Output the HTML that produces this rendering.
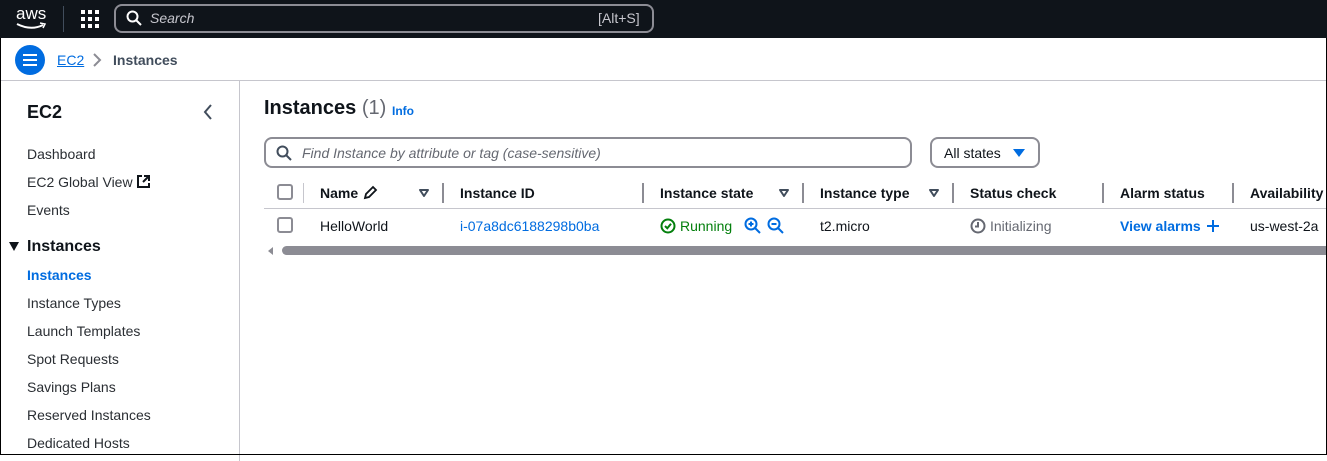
<!DOCTYPE html>
<html><head><meta charset="utf-8"><style>
*{box-sizing:border-box;margin:0;padding:0}
body{width:1327px;height:455px;overflow:hidden;font-family:"Liberation Sans",sans-serif;font-size:14px;color:#0f141a;background:#fff;position:relative}
.abs{position:absolute;white-space:nowrap}
.top{position:absolute;left:0;top:0;width:1327px;height:38px;background:#0f141a}
.crumb{position:absolute;left:0;top:38px;width:1327px;height:43px;border-bottom:1px solid #c6c6cd}
.side{position:absolute;left:0;top:81px;width:240px;height:380px;border-right:1px solid #c6c6cd}
.nav{position:absolute;left:27px;font-size:14px;color:#2a2e33}
.th{position:absolute;top:185px;font-weight:bold;font-size:14px;color:#0f141a}
.sep{position:absolute;top:183px;width:2px;height:20px;background:#8c8c94}
.cb{position:absolute;width:16px;height:16px;border:2px solid #8c8c94;border-radius:3px;left:277px}
.tri{position:absolute;top:187px}
</style></head><body>
<div class="top">
<div class="abs" style="left:16px;top:4px;color:#fff;font-size:17px">aws</div>
<svg class="abs" style="left:15px;top:22px" width="34" height="8"><path d="M2 2 Q16 9 28 3" stroke="#fff" stroke-width="2" fill="none"/><path d="M25 1 L30 2 L28 6" stroke="#fff" stroke-width="1.5" fill="none"/></svg>
<div class="abs" style="left:63px;top:6px;width:1px;height:26px;background:#414d5c"></div>
<svg class="abs" style="left:81px;top:10px" width="18" height="18" fill="#fff"><rect x="0" y="0" width="4" height="4"/><rect x="7" y="0" width="4" height="4"/><rect x="14" y="0" width="4" height="4"/><rect x="0" y="7" width="4" height="4"/><rect x="7" y="7" width="4" height="4"/><rect x="14" y="7" width="4" height="4"/><rect x="0" y="14" width="4" height="4"/><rect x="7" y="14" width="4" height="4"/><rect x="14" y="14" width="4" height="4"/></svg>
<div class="abs" style="left:114px;top:4px;width:540px;height:29px;border:2px solid #8c8c94;border-radius:8px"></div>
<svg class="abs" style="left:126px;top:10px" width="16" height="16"><circle cx="6.5" cy="6.5" r="5" stroke="#fff" stroke-width="2" fill="none"/><path d="M10 10 L15 15" stroke="#fff" stroke-width="2"/></svg>
<div class="abs" style="left:150px;top:10px;color:#c6c6cd;font-style:italic">Search</div>
<div class="abs" style="left:598px;top:10px;color:#c6c6cd">[Alt+S]</div>
</div>
<div class="crumb">
<div class="abs" style="left:15px;top:7px;width:30px;height:30px;border-radius:50%;background:#006ce0"></div>
<svg class="abs" style="left:22px;top:14px" width="16" height="16"><path d="M1 3H15M1 8H15M1 13H15" stroke="#fff" stroke-width="2"/></svg>
<div class="abs" style="left:57px;top:14px;color:#006ce0;text-decoration:underline">EC2</div>
<svg class="abs" style="left:92px;top:15px" width="10" height="14"><path d="M2 1 L8 7 L2 13" stroke="#8c8c94" stroke-width="2" fill="none"/></svg>
<div class="abs" style="left:113px;top:14px;color:#414d5c;font-weight:bold">Instances</div>
</div>
<div class="side">
<div class="abs" style="left:27px;top:21px;font-size:18px;font-weight:bold">EC2</div>
<svg class="abs" style="left:203px;top:23px" width="10" height="16"><path d="M8 1 L2 8 L8 15" stroke="#414d5c" stroke-width="2" fill="none"/></svg>
</div>
<div class="nav" style="top:146px">Dashboard</div>
<div class="nav" style="top:174px">EC2 Global View</div>
<svg class="abs" style="left:136px;top:174px" width="15" height="15"><path d="M6 2H2V13H13V9" stroke="#0f141a" stroke-width="2" fill="none"/><path d="M8 2H13V7M13 2L7 8" stroke="#0f141a" stroke-width="2" fill="none"/></svg>
<div class="nav" style="top:202px">Events</div>
<div class="abs" style="left:9px;top:242px;width:0;height:0;border-left:5px solid transparent;border-right:5px solid transparent;border-top:9px solid #0f141a"></div>
<div class="nav" style="top:238px;font-weight:bold;font-size:16px;color:#0f141a">Instances</div>
<div class="nav" style="top:267px;font-weight:bold;color:#006ce0">Instances</div>
<div class="nav" style="top:295px">Instance Types</div>
<div class="nav" style="top:323px">Launch Templates</div>
<div class="nav" style="top:351px">Spot Requests</div>
<div class="nav" style="top:379px">Savings Plans</div>
<div class="nav" style="top:407px">Reserved Instances</div>
<div class="nav" style="top:435px">Dedicated Hosts</div>

<div class="abs" style="left:264px;top:97px;font-size:20px;font-weight:bold">Instances <span style="font-weight:normal;color:#656871">(1)</span></div>
<div class="abs" style="left:392px;top:104px;font-size:12px;font-weight:bold;color:#006ce0">Info</div>
<div class="abs" style="left:264px;top:137px;width:648px;height:31px;border:2px solid #8c8c94;border-radius:8px"></div>
<svg class="abs" style="left:276px;top:145px" width="16" height="16"><circle cx="6.5" cy="6.5" r="5" stroke="#414d5c" stroke-width="2" fill="none"/><path d="M10 10 L15 15" stroke="#414d5c" stroke-width="2"/></svg>
<div class="abs" style="left:302px;top:145px;color:#656871;font-style:italic">Find Instance by attribute or tag (case-sensitive)</div>
<div class="abs" style="left:930px;top:137px;width:110px;height:31px;border:2px solid #8c8c94;border-radius:8px"></div>
<div class="abs" style="left:944px;top:145px">All states</div>
<div class="abs" style="left:1013px;top:149px;width:0;height:0;border-left:6px solid transparent;border-right:6px solid transparent;border-top:8px solid #006ce0"></div>

<div class="cb" style="top:184px"></div>
<div class="sep" style="left:303px;width:1px;background:#c6c6cd"></div>
<div class="th" style="left:320px">Name</div>
<svg class="abs" style="left:363px;top:185px" width="15" height="15"><path d="M2 13 L3 9 L10 2 L13 5 L6 12 Z" stroke="#0f141a" stroke-width="1.8" fill="none"/></svg>
<svg class="tri" style="left:418px" width="12" height="12"><path d="M2 3 H10 L6 9 Z" stroke="#414d5c" stroke-width="2" fill="none" stroke-linejoin="round"/></svg>
<div class="sep" style="left:442px"></div>
<div class="th" style="left:460px">Instance ID</div>
<div class="sep" style="left:642px"></div>
<div class="th" style="left:660px">Instance state</div>
<svg class="tri" style="left:778px" width="12" height="12"><path d="M2 3 H10 L6 9 Z" stroke="#414d5c" stroke-width="2" fill="none" stroke-linejoin="round"/></svg>
<div class="sep" style="left:802px"></div>
<div class="th" style="left:820px">Instance type</div>
<svg class="tri" style="left:928px" width="12" height="12"><path d="M2 3 H10 L6 9 Z" stroke="#414d5c" stroke-width="2" fill="none" stroke-linejoin="round"/></svg>
<div class="sep" style="left:952px"></div>
<div class="th" style="left:970px">Status check</div>
<div class="sep" style="left:1102px"></div>
<div class="th" style="left:1120px">Alarm status</div>
<div class="sep" style="left:1232px"></div>
<div class="th" style="left:1250px">Availability</div>
<div class="abs" style="left:264px;top:208px;width:1063px;height:1px;background:#c6c6cd"></div>

<div class="cb" style="top:217px"></div>
<div class="abs" style="left:320px;top:218px">HelloWorld</div>
<div class="abs" style="left:460px;top:218px;color:#006ce0">i-07a8dc6188298b0ba</div>
<svg class="abs" style="left:660px;top:218px" width="16" height="16"><circle cx="8" cy="8" r="6.5" stroke="#037f0c" stroke-width="2" fill="none"/><path d="M5 8 L7.3 10.3 L11 5.7" stroke="#037f0c" stroke-width="2" fill="none"/></svg>
<div class="abs" style="left:680px;top:218px;color:#037f0c">Running</div>
<svg class="abs" style="left:744px;top:217px" width="18" height="18"><circle cx="7" cy="7" r="5.5" stroke="#006ce0" stroke-width="2" fill="none"/><path d="M11 11 L16 16M4.5 7H9.5M7 4.5V9.5" stroke="#006ce0" stroke-width="2"/></svg>
<svg class="abs" style="left:767px;top:217px" width="18" height="18"><circle cx="7" cy="7" r="5.5" stroke="#006ce0" stroke-width="2" fill="none"/><path d="M11 11 L16 16M4.5 7H9.5" stroke="#006ce0" stroke-width="2"/></svg>
<div class="abs" style="left:820px;top:218px">t2.micro</div>
<svg class="abs" style="left:970px;top:218px" width="16" height="16"><circle cx="8" cy="8" r="6.5" stroke="#656871" stroke-width="2" fill="none"/><path d="M8 4 V8.5 H5" stroke="#656871" stroke-width="2" fill="none"/></svg>
<div class="abs" style="left:990px;top:218px;color:#656871">Initializing</div>
<div class="abs" style="left:1120px;top:218px;color:#006ce0;font-weight:bold">View alarms</div>
<svg class="abs" style="left:1206px;top:219px" width="14" height="14"><path d="M7 1V13M1 7H13" stroke="#006ce0" stroke-width="2"/></svg>
<div class="abs" style="left:1250px;top:218px">us-west-2a</div>

<div class="abs" style="left:268px;top:247px;width:0;height:0;border-top:4px solid transparent;border-bottom:4px solid transparent;border-right:5px solid #8c8c94"></div>
<div class="abs" style="left:282px;top:246px;width:1045px;height:9px;border-radius:5px 0 0 5px;background:#8c8c94"></div>
<div class="abs" style="left:0;top:38px;width:1327px;height:417px;border-left:1px solid #000;border-right:1px solid #000;border-bottom:1px solid #000"></div>
</body></html>
